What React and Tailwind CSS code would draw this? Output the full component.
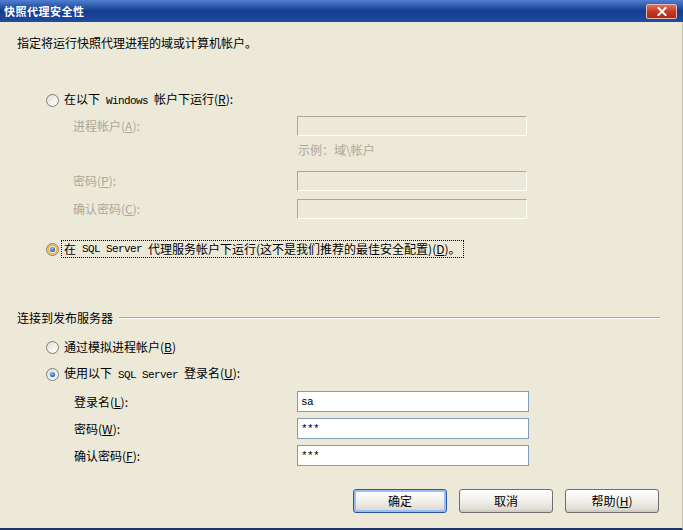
import React from "react";

const Mono = ({ children }) => (
  <span className="font-['Liberation_Mono',monospace] text-[11px] tracking-[-0.6px] whitespace-pre">{children}</span>
);

const Key = ({ children }) => (
  <span>
    (<span className="underline">{children}</span>)
  </span>
);

function Radio({ checked, hot }) {
  return (
    <svg width="13" height="13" viewBox="0 0 13 13" className="shrink-0">
      <defs>
        <linearGradient id="radioFill" x1="0" y1="0" x2="1" y2="1">
          <stop offset="0" stopColor="#dcdcd6" />
          <stop offset="0.6" stopColor="#f4f4f0" />
          <stop offset="1" stopColor="#ffffff" />
        </linearGradient>
        <radialGradient id="radioDot" cx="0.4" cy="0.35" r="0.7">
          <stop offset="0" stopColor="#8cc2f5" />
          <stop offset="1" stopColor="#2157b8" />
        </radialGradient>
      </defs>
      <circle cx="6.5" cy="6.5" r="6" fill="url(#radioFill)" stroke="#7c7c7c" strokeWidth="1" />
      {hot && <circle cx="6.5" cy="6.5" r="4.4" fill="none" stroke="#f7b238" strokeWidth="1.8" />}
      {checked && <circle cx="6.5" cy="6.5" r="2.6" fill="url(#radioDot)" />}
    </svg>
  );
}

const DisabledBox = () => (
  <div className="w-[230px] h-[20px] border border-[#aca899] border-b-[#fffff8] border-r-[#fffff8]" />
);

const TextBox = ({ value }) => (
  <div className="w-[232px] h-[21px] border border-[#7f9db9] bg-white flex items-center pl-[3px] font-['Liberation_Mono',monospace] text-[11px] tracking-[-0.6px] text-black">
    {value}
  </div>
);

const Button = ({ children, focused }) => (
  <div
    className={
      focused
        ? "w-[94px] h-[24px] rounded-[3px] border border-[#2d55a0] bg-linear-to-b from-[#ffffff] via-[#f1f0ea] to-[#d8d5cb] shadow-[inset_0_0_0_2px_#9cbdf0] flex items-center justify-center"
        : "w-[94px] h-[24px] rounded-[3px] border border-[#6f6f6f] bg-linear-to-b from-[#ffffff] via-[#f1f0ea] to-[#d8d5cb] shadow-[inset_0_-2px_0_#d0cdc2] flex items-center justify-center"
    }
  >
    {children}
  </div>
);

export default function App() {
  return (
    <div className="w-[683px] h-[530px] flex flex-col overflow-hidden font-['Noto_Sans_CJK_SC',sans-serif] text-[12px] leading-4 text-black">
      <div className="h-[22px] shrink-0 flex items-center justify-between pl-[4px] pr-[6px] bg-linear-to-b from-[#4f7fd3] via-[#133c8d] to-[#1f4d9f]">
        <span className="text-white font-bold text-[11px] tracking-[0.5px]">快照代理安全性</span>
        <div className="w-[31px] h-[15px] rounded-[2px] border border-[#e9b9b0] bg-linear-to-b from-[#e0705c] via-[#c43b26] to-[#a82a1a] flex items-center justify-center">
          <svg width="10" height="9" viewBox="0 0 10 9">
            <path d="M1.5 1 L8.5 8 M8.5 1 L1.5 8" stroke="white" strokeWidth="2" strokeLinecap="square" />
          </svg>
        </div>
      </div>

      <div className="flex-1 flex flex-col bg-[#ece9d8] border-b-2 border-[#1e3567] border-r border-r-[#c9c5b4]">
        <div className="mt-[13px] ml-[17px] h-4">指定将运行快照代理进程的域或计算机帐户。</div>

        <div className="mt-[41px] ml-[46px] h-4 flex items-center gap-[5px]">
          <Radio />
          <span>
            在以下<Mono>{" Windows "}</Mono>帐户下运行<Key>R</Key>:
          </span>
        </div>

        <div className="mt-[8px] h-[20px] flex items-center">
          <span className="ml-[73px] w-[224px] text-[#aca899]">
            进程帐户<Key>A</Key>:
          </span>
          <DisabledBox />
        </div>

        <div className="mt-[6px] ml-[298px] h-4 text-[#aca899]">示例：域\帐户</div>

        <div className="mt-[13px] h-[20px] flex items-center">
          <span className="ml-[73px] w-[224px] text-[#aca899]">
            密码<Key>P</Key>:
          </span>
          <DisabledBox />
        </div>

        <div className="mt-[8px] h-[20px] flex items-center">
          <span className="ml-[73px] w-[224px] text-[#aca899]">
            确认密码<Key>C</Key>:
          </span>
          <DisabledBox />
        </div>

        <div className="mt-[21px] ml-[46px] h-[18px] flex items-center gap-[2px]">
          <Radio checked hot />
          <span className="border border-dotted border-black h-[18px] flex items-center px-[2px]">
            在<Mono>{" SQL Server "}</Mono>代理服务帐户下运行(这不是我们推荐的最佳安全配置)<Key>D</Key>。
          </span>
        </div>

        <div className="mt-[52px] ml-[17px] mr-[22px] h-4 flex items-center gap-[6px]">
          <span className="shrink-0">连接到发布服务器</span>
          <div className="flex-1 h-[2px] border-t border-[#aca899] border-b border-b-white" />
        </div>

        <div className="mt-[13px] ml-[46px] h-4 flex items-center gap-[5px]">
          <Radio />
          <span>
            通过模拟进程帐户<Key>B</Key>
          </span>
        </div>

        <div className="mt-[11px] ml-[46px] h-4 flex items-center gap-[5px]">
          <Radio checked />
          <span>
            使用以下<Mono>{" SQL Server "}</Mono>登录名<Key>U</Key>:
          </span>
        </div>

        <div className="mt-[9px] h-[21px] flex items-center">
          <span className="ml-[74px] w-[223px]">
            登录名<Key>L</Key>:
          </span>
          <TextBox value="sa" />
        </div>

        <div className="mt-[6px] h-[21px] flex items-center">
          <span className="ml-[74px] w-[223px]">
            密码<Key>W</Key>:
          </span>
          <TextBox value="***" />
        </div>

        <div className="mt-[6px] h-[21px] flex items-center">
          <span className="ml-[74px] w-[223px]">
            确认密码<Key>F</Key>:
          </span>
          <TextBox value="***" />
        </div>

        <div className="mt-[23px] ml-[353px] flex gap-[12px]">
          <Button focused>确定</Button>
          <Button>取消</Button>
          <Button>
            帮助<Key>H</Key>
          </Button>
        </div>
      </div>
    </div>
  );
}
